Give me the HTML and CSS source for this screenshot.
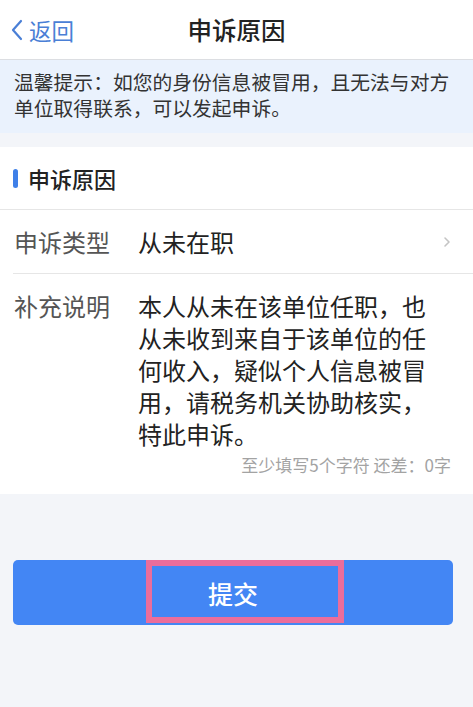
FILE: index.html
```html
<!DOCTYPE html>
<html lang="zh">
<head>
<meta charset="utf-8">
<link rel="stylesheet" href="styles.css">
</head>
<body>
<div class="nav">
  <div class="back">
    <svg class="back-icon" width="12" height="22" viewBox="0 0 12 22"><path d="M10 2 L2 11 L10 20" fill="none" stroke="#4a7fd6" stroke-width="2.2" stroke-linecap="round" stroke-linejoin="round"/></svg>
    <span>返回</span>
  </div>
  <div class="title">申诉原因</div>
</div>
<div class="tip">温馨提示：如您的身份信息被冒用，且无法与对方单位取得联系，可以发起申诉。</div>
<div class="card">
  <div class="sec-head"><span class="bar"></span><span>申诉原因</span></div>
  <div class="row">
    <span class="label">申诉类型</span>
    <span class="value">从未在职</span>
    <svg class="chev" width="8" height="12" viewBox="0 0 8 12"><path d="M2 2 L6 6 L2 10" fill="none" stroke="#c4c4c4" stroke-width="1.6" stroke-linecap="round" stroke-linejoin="round"/></svg>
  </div>
  <div class="row desc">
    <span class="label">补充说明</span>
    <div class="desc-text">本人从未在该单位任职，也从未收到来自于该单位的任何收入，疑似个人信息被冒用，请税务机关协助核实，特此申诉。</div>
  </div>
  <div class="counter">至少填写5个字符 还差：0字</div>
</div>
<div class="btn">
  <span class="btn-text">提交</span>
  <span class="mark"></span>
</div>
</body>
</html>
```
FILE: styles.css
```css
* { box-sizing: border-box; }
body {
  margin: 0;
  background: #f3f5f9;
  font-family: "Noto Sans CJK SC", "Noto Sans", sans-serif;
  color: #222;
}
.nav {
  height: 60px;
  background: #fff;
  border-bottom: 1px solid #dcdee2;
  position: relative;
  display: flex;
  align-items: center;
  justify-content: center;
}
.back {
  position: absolute;
  left: 11px;
  top: 0;
  height: 59px;
  display: flex;
  align-items: center;
  gap: 6px;
  color: #4a7fd6;
  font-size: 22.5px;
}
.title {
  font-size: 24.5px;
  color: #222;
  font-weight: 500;
}
.tip {
  background: #eaf2fd;
  padding: 9px 14px 12px 14px;
  font-size: 19.8px;
  line-height: 26px;
  color: #333;
}
.card {
  background: #fff;
  margin-top: 14px;
  padding-bottom: 20px;
}
.sec-head {
  height: 63px;
  display: flex;
  align-items: center;
  gap: 10px;
  padding-left: 13px;
  border-bottom: 1px solid #e6e6e6;
  font-size: 22px;
  font-weight: 500;
  color: #222;
}
.bar {
  width: 5px;
  height: 19px;
  border-radius: 3px;
  background: #3f80e8;
}
.row {
  margin-left: 13px;
  display: flex;
  align-items: center;
  height: 64px;
  border-bottom: 1px solid #e6e6e6;
  font-size: 24px;
  position: relative;
}
.label {
  color: #555;
  width: 125px;
  flex: none;
  padding-left: 1px;
}
.value { color: #222; }
.chev {
  position: absolute;
  right: 22px;
  top: 26px;
}
.row.desc {
  border-bottom: none;
  height: auto;
  align-items: flex-start;
  padding-top: 16px;
  line-height: 32px;
}
.desc-text {
  width: 300px;
  color: #222;
}
.counter {
  text-align: right;
  padding-right: 22px;
  font-size: 17px;
  line-height: 18px;
  color: #a3a3a3;
  margin-top: 6px;
}
.btn {
  margin: 66px 0 0 13px;
  width: 440px;
  height: 65px;
  border-radius: 5px;
  background: #4386f4;
  position: relative;
  display: flex;
  align-items: center;
  justify-content: center;
}
.btn-text {
  color: #fff;
  font-size: 25px;
  font-weight: 500;
}
.mark {
  position: absolute;
  left: 133px;
  top: 0;
  width: 198px;
  height: 63px;
  border: 6px solid #eb6d9b;
}
```
